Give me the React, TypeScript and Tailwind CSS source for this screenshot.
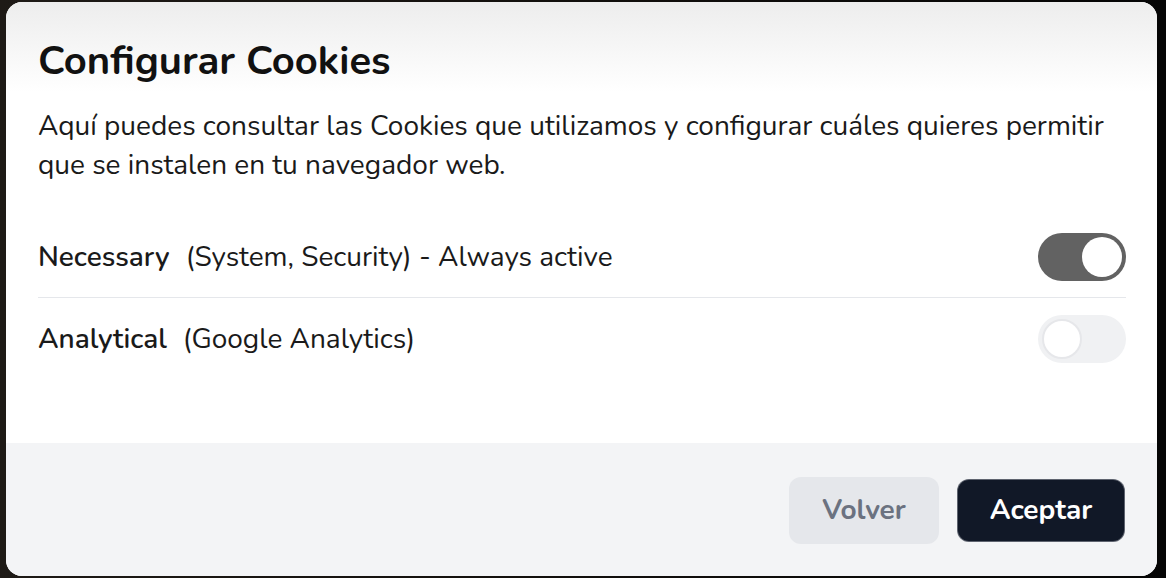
import React, { useState } from 'react';

function Toggle({ on, onChange }: { on: boolean; onChange?: () => void }) {
    return (
        <button
            type="button"
            onClick={onChange}
            className={`relative h-12 w-[88px] shrink-0 rounded-full transition-colors ${
                on ? 'bg-[#626262]' : 'bg-[#f0f1f3]'
            }`}
        >
            <span
                className={`absolute top-1 h-10 w-10 rounded-full bg-white transition-all ${
                    on ? 'left-[44px]' : 'left-1 border-2 border-[#e6e7ea]'
                }`}
            />
        </button>
    );
}

export default function App() {
    const [analytical, setAnalytical] = useState(false);

    return (
        <div
            className="h-[578px] w-full overflow-hidden bg-[linear-gradient(to_right,#1e1a16,#14110e_40%,#050505)] pl-[6px] pt-[2px]"
            style={{ fontFamily: '"Nunito", "Lato", "Noto Sans", sans-serif' }}
        >
            <div className="flex h-[574px] w-[1151px] flex-col overflow-hidden rounded-2xl bg-white">
                {/* Body */}
                <div className="flex-1 bg-[linear-gradient(to_bottom,#ededed,#ffffff_90px)] px-8 pt-[39px]">
                    <h2 className="text-[40px] font-bold leading-10 text-[#111]">
                        Configurar Cookies
                    </h2>
                    <p className="mt-[26px] text-[28px] leading-[39px] text-[#1a1a1a]">
                        Aquí puedes consultar las Cookies que utilizamos y configurar cuáles quieres
                        permitir
                        <br />
                        que se instalen en tu navegador web.
                    </p>

                    <div className="mt-[32px] w-[1088px]">
                        <div className="flex items-center justify-between border-b border-[#e5e7eb] py-4">
                            <div className="text-[28px] text-[#1a1a1a]">
                                <span className="font-semibold">Necessary</span>
                                <span className="ml-4">(System, Security) - Always active</span>
                            </div>
                            <Toggle on />
                        </div>
                        <div className="flex items-center justify-between pt-[17px]">
                            <div className="text-[28px] text-[#1a1a1a]">
                                <span className="font-semibold">Analytical</span>
                                <span className="ml-4">(Google Analytics)</span>
                            </div>
                            <Toggle on={analytical} onChange={() => setAnalytical(!analytical)} />
                        </div>
                    </div>
                </div>

                {/* Footer */}
                <div className="flex h-[133px] items-center justify-end gap-[18px] bg-[#f3f4f6] pr-8 pt-[1px]">
                    <button className="h-[67px] w-[150px] rounded-xl bg-[#e5e7eb] text-[28px] font-bold text-[#6b7280]">
                        Volver
                    </button>
                    <button className="h-[63px] w-[168px] rounded-xl border border-[#d1d5db]/40 bg-[#111827] text-[28px] font-bold text-white">
                        Aceptar
                    </button>
                </div>
            </div>
        </div>
    );
}
